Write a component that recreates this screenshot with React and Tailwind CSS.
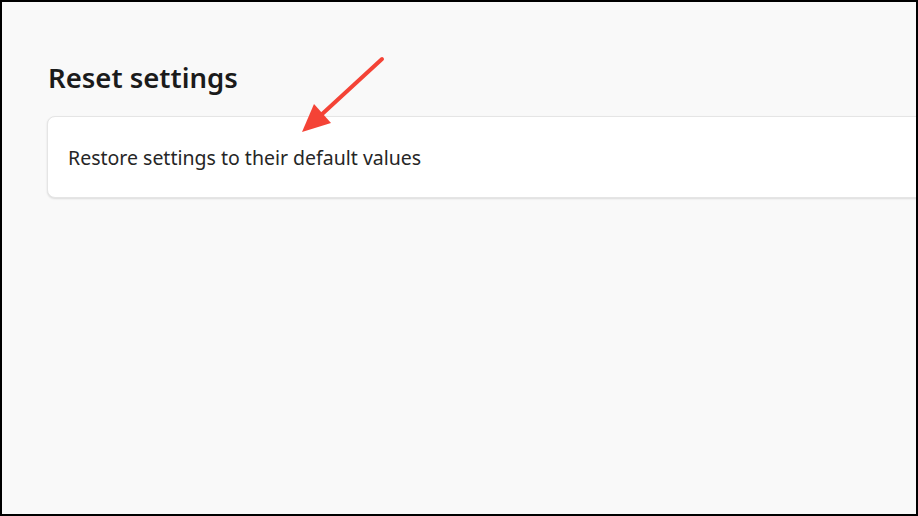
export default function App() {
  return (
    <div className="relative w-[918px] h-[516px] overflow-hidden border-2 border-black bg-[#f9f9f9]" style={{ fontFamily: '"Noto Sans", "Open Sans", sans-serif' }}>
      <div className="pl-[45px] pt-[57px] -mr-[20px]">
        <h1 className="text-[27.5px] leading-[38px] font-semibold text-[#1b1b1b] ml-[1px]">Reset settings</h1>
        <div className="mt-[19px] h-[82px] rounded-[8px] bg-white border border-[#e5e5e5] shadow-[0_1px_2px_rgba(0,0,0,0.12)] flex items-center pl-[20px] pt-[1px]">
          <span className="text-[19.5px] text-[#262626]">Restore settings to their default values</span>
        </div>
      </div>
      <svg className="absolute left-0 top-0 pointer-events-none" width="918" height="516" viewBox="0 0 918 516">
        <line x1="380" y1="57" x2="318" y2="114" stroke="#f44336" strokeWidth="4" strokeLinecap="round" />
        <polygon points="300,130 312,102 329,121" fill="#f44336" />
      </svg>
    </div>
  );
}
